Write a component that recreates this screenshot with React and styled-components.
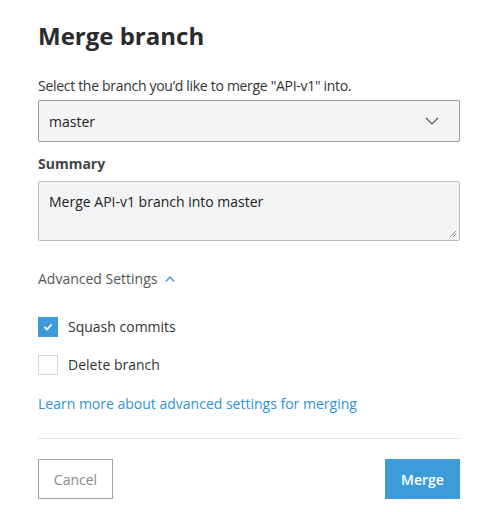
import React from 'react'
import styled, { createGlobalStyle } from 'styled-components'

const GlobalStyle = createGlobalStyle`
  body {
    margin: 0;
    background: #fff;
    font-family: 'Open Sans', 'Noto Sans', sans-serif;
    color: #333;
  }
`

const Dialog = styled.div`
  width: 498px;
  box-sizing: border-box;
  padding: 20px 38px 13px;
`

const Title = styled.h1`
  margin: 0;
  font-size: 24px;
  line-height: 32px;
  font-weight: 700;
  color: #2b2b2b;
`

const Prompt = styled.p`
  margin: 24px 0 0;
  font-size: 14px;
  letter-spacing: -0.3px;
  line-height: 20px;
  color: #333;
`

const SelectBox = styled.div`
  margin-top: 4px;
  height: 42px;
  box-sizing: border-box;
  border: 1px solid #9a9a9a;
  border-radius: 2px;
  background: #f5f5f7;
  display: flex;
  align-items: center;
  justify-content: space-between;
  padding: 0 20px 0 10px;
  font-size: 14px;
  color: #222;
`

const FieldLabel = styled.div`
  margin-top: 12px;
  font-size: 14px;
  line-height: 20px;
  font-weight: 700;
  color: #444;
`

const Summary = styled.div`
  position: relative;
  margin-top: 7px;
  height: 60px;
  box-sizing: border-box;
  border: 1px solid #bdbdbd;
  border-radius: 2px;
  background: #f3f4f6;
  padding: 10px 10px;
  font-size: 14px;
  line-height: 20px;
  color: #222;
`

const Grip = styled.svg`
  position: absolute;
  right: 2px;
  bottom: 2px;
`

const Advanced = styled.div`
  margin-top: 28px;
  display: flex;
  align-items: center;
  gap: 8px;
  font-size: 14px;
  line-height: 20px;
  color: #555;
`

const Options = styled.div`
  margin-top: 28px;
  display: flex;
  flex-direction: column;
  gap: 18px;
`

const Option = styled.label`
  display: flex;
  align-items: center;
  gap: 10px;
  font-size: 14px;
  line-height: 20px;
  color: #333;
`

const Box = styled.span`
  width: 20px;
  height: 20px;
  box-sizing: border-box;
  display: flex;
  align-items: center;
  justify-content: center;
  border: 1px solid ${p => (p.checked ? '#3e9bd9' : '#d4d4d4')};
  background: ${p => (p.checked ? '#3e9bd9' : '#fff')};
`

const Link = styled.a`
  display: block;
  margin-top: 19px;
  font-size: 14px;
  line-height: 20px;
  color: #2f93d6;
  text-decoration: none;
`

const Divider = styled.hr`
  margin: 24px 0 0;
  border: 0;
  border-top: 1px solid #e4e4e4;
`

const Footer = styled.div`
  margin-top: 20px;
  display: flex;
  justify-content: space-between;
`

const Button = styled.button`
  width: 75px;
  height: 40px;
  font-family: inherit;
  font-size: 14px;
  border-radius: 0;
  cursor: pointer;
  border: 1px solid ${p => (p.primary ? '#3e9bd9' : '#a3a3a3')};
  background: ${p => (p.primary ? '#3e9bd9' : '#fff')};
  color: ${p => (p.primary ? '#fff' : '#8a8a8a')};
  font-weight: ${p => (p.primary ? 600 : 400)};
`

export default function App() {
  return (
    <Dialog>
      <GlobalStyle />
      <Title>Merge branch</Title>
      <Prompt>Select the branch you’d like to merge "API-v1" into.</Prompt>
      <SelectBox>
        <span>master</span>
        <svg width="14" height="8" viewBox="0 0 14 8">
          <path d="M1 1l6 6 6-6" fill="none" stroke="#555" strokeWidth="1.2" />
        </svg>
      </SelectBox>
      <FieldLabel>Summary</FieldLabel>
      <Summary>
        Merge API-v1 branch into master
        <Grip width="8" height="8" viewBox="0 0 8 8">
          <path d="M7 1L1 7M7 4L4 7" stroke="#888" strokeWidth="1" />
        </Grip>
      </Summary>
      <Advanced>
        Advanced Settings
        <svg width="10" height="6" viewBox="0 0 10 6">
          <path d="M1 5.5l4-4.5 4 4.5" fill="none" stroke="#3e9bd9" strokeWidth="1.2" />
        </svg>
      </Advanced>
      <Options>
        <Option>
          <Box checked>
            <svg width="10" height="8" viewBox="0 0 10 8">
              <path d="M1.5 4l2.5 2.5 4.5-5" fill="none" stroke="#fff" strokeWidth="1.8" />
            </svg>
          </Box>
          Squash commits
        </Option>
        <Option>
          <Box />
          Delete branch
        </Option>
      </Options>
      <Link href="#">Learn more about advanced settings for merging</Link>
      <Divider />
      <Footer>
        <Button>Cancel</Button>
        <Button primary>Merge</Button>
      </Footer>
    </Dialog>
  )
}
